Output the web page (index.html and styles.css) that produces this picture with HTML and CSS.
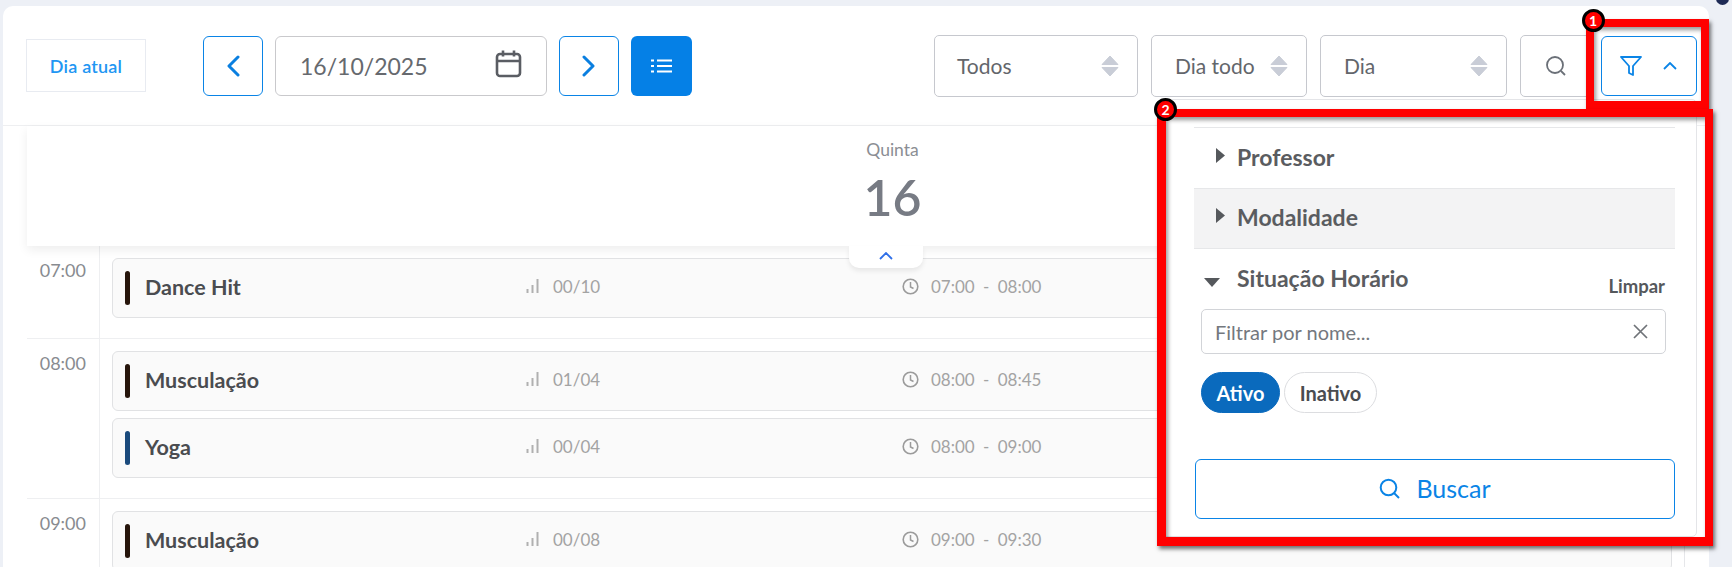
FILE: index.html
```html
<!DOCTYPE html>
<html lang="pt-BR">
<head>
<meta charset="utf-8">
<title>Agenda</title>
<link rel="stylesheet" href="styles.css">
</head>
<body>
<div class="avatar-edge"></div>
<main class="card">
  <header class="toolbar">
    <button class="today">Dia atual</button>
    <div class="date-nav">
      <button class="nav-btn"><svg width="14" height="22" viewBox="0 0 14 22"><path d="M12 2 3 11l9 9" class="stroke-blue"/></svg></button>
      <div class="date-field">
        <span>16/10/2025</span>
        <svg class="cal" width="27" height="29" viewBox="0 0 27 29"><rect x="2" y="5" width="23" height="22" rx="3" fill="none" stroke="#5a5d63" stroke-width="2.6"/><path d="M2 12h23M8 1.500v6M19 1.500v6" fill="none" stroke="#5a5d63" stroke-width="2.600"/></svg>
      </div>
      <button class="nav-btn"><svg width="14" height="22" viewBox="0 0 14 22"><path d="m2 2 9 9-9 9" class="stroke-blue"/></svg></button>
      <button class="list-btn"><svg width="21" height="14" viewBox="0 0 21 14"><path d="M0 1.500h3M6 1.500h15M0 7h3M6 7h15M0 12.500h3M6 12.500h15" stroke="#fff" stroke-width="2" fill="none"/></svg></button>
    </div>
    <div class="filters">
      <div class="select sel-todos"><span>Todos</span><svg class="updown" width="18" height="22" viewBox="0 0 18 22"><path d="M9 1 17 9.500H1zM1 12.500h16L9 21z" fill="#c9cdd7" stroke="#c9cdd7" stroke-linejoin="round"/></svg></div>
      <div class="select sel-dia-todo"><span>Dia todo</span><svg class="updown" width="18" height="22" viewBox="0 0 18 22"><path d="M9 1 17 9.500H1zM1 12.500h16L9 21z" fill="#c9cdd7" stroke="#c9cdd7" stroke-linejoin="round"/></svg></div>
      <div class="select sel-dia"><span>Dia</span><svg class="updown" width="18" height="22" viewBox="0 0 18 22"><path d="M9 1 17 9.500H1zM1 12.500h16L9 21z" fill="#c9cdd7" stroke="#c9cdd7" stroke-linejoin="round"/></svg></div>
      <button class="search-btn"><svg width="22" height="22" viewBox="0 0 22 22"><circle cx="10" cy="10" r="8" fill="none" stroke="#6b7078" stroke-width="1.800"/><path d="m16 16 4 4" stroke="#6b7078" stroke-width="1.800" fill="none"/></svg></button>
      <button class="filter-btn">
        <svg width="22" height="20" viewBox="0 0 22 20"><path d="M1 1h20l-8 9v9l-4-2v-7z" fill="none" stroke="#0a84e6" stroke-width="1.800" stroke-linejoin="round"/></svg>
        <svg width="14" height="8" viewBox="0 0 14 8"><path d="m1 7 6-6 6 6" fill="none" stroke="#0a84e6" stroke-width="1.800"/></svg>
      </button>
    </div>
  </header>

  <section class="schedule">
    <div class="day-head">
      <div class="day-name">Quinta</div>
      <div class="day-num">16</div>
    </div>

    <div class="slot">
      <div class="slot-time">07:00</div>
      <div class="slot-rows">
        <article class="row">
          <i class="bar bar-dark"></i><b class="name">Dance Hit</b>
          <span class="meta"><svg width="13" height="14" viewBox="0 0 13 14"><path d="M1.500 14v-4M6.500 14V6M11.500 14V0" stroke="#b0b0b0" stroke-width="2" fill="none"/></svg>00/10</span>
          <span class="meta meta-time"><svg width="17" height="17" viewBox="0 0 17 17"><circle cx="8.500" cy="8.500" r="7.300" fill="none" stroke="#9b9b9b" stroke-width="1.600"/><path d="M8.500 4v5l3 1.500" fill="none" stroke="#9b9b9b" stroke-width="1.500"/></svg>07:00 - 08:00</span>
        </article>
      </div>
    </div>

    <div class="slot">
      <div class="slot-time">08:00</div>
      <div class="slot-rows">
        <article class="row">
          <i class="bar bar-dark"></i><b class="name">Musculação</b>
          <span class="meta"><svg width="13" height="14" viewBox="0 0 13 14"><path d="M1.500 14v-4M6.500 14V6M11.500 14V0" stroke="#b0b0b0" stroke-width="2" fill="none"/></svg>01/04</span>
          <span class="meta meta-time"><svg width="17" height="17" viewBox="0 0 17 17"><circle cx="8.500" cy="8.500" r="7.300" fill="none" stroke="#9b9b9b" stroke-width="1.600"/><path d="M8.500 4v5l3 1.500" fill="none" stroke="#9b9b9b" stroke-width="1.500"/></svg>08:00 - 08:45</span>
        </article>
        <article class="row">
          <i class="bar bar-blue"></i><b class="name">Yoga</b>
          <span class="meta"><svg width="13" height="14" viewBox="0 0 13 14"><path d="M1.500 14v-4M6.500 14V6M11.500 14V0" stroke="#b0b0b0" stroke-width="2" fill="none"/></svg>00/04</span>
          <span class="meta meta-time"><svg width="17" height="17" viewBox="0 0 17 17"><circle cx="8.500" cy="8.500" r="7.300" fill="none" stroke="#9b9b9b" stroke-width="1.600"/><path d="M8.500 4v5l3 1.500" fill="none" stroke="#9b9b9b" stroke-width="1.500"/></svg>08:00 - 09:00</span>
        </article>
      </div>
    </div>

    <div class="slot">
      <div class="slot-time">09:00</div>
      <div class="slot-rows">
        <article class="row">
          <i class="bar bar-dark"></i><b class="name">Musculação</b>
          <span class="meta"><svg width="13" height="14" viewBox="0 0 13 14"><path d="M1.500 14v-4M6.500 14V6M11.500 14V0" stroke="#b0b0b0" stroke-width="2" fill="none"/></svg>00/08</span>
          <span class="meta meta-time"><svg width="17" height="17" viewBox="0 0 17 17"><circle cx="8.500" cy="8.500" r="7.300" fill="none" stroke="#9b9b9b" stroke-width="1.600"/><path d="M8.500 4v5l3 1.500" fill="none" stroke="#9b9b9b" stroke-width="1.500"/></svg>09:00 - 09:30</span>
        </article>
      </div>
    </div>

    <button class="collapse-tab"><svg width="14" height="8" viewBox="0 0 14 8"><path d="m1 7 6-6 6 6" fill="none" stroke="#2f6fe8" stroke-width="1.800"/></svg></button>
  </section>

  <aside class="filter-panel">
    <div class="acc-row">
      <svg class="caret" width="9" height="15" viewBox="0 0 9 15"><path d="M0 0 9 7.500 0 15z" fill="#55585c"/></svg>
      <strong>Professor</strong>
    </div>
    <div class="acc-row acc-active">
      <svg class="caret" width="9" height="15" viewBox="0 0 9 15"><path d="M0 0 9 7.500 0 15z" fill="#55585c"/></svg>
      <strong>Modalidade</strong>
    </div>
    <div class="acc-open">
      <svg class="caret-down" width="16" height="9" viewBox="0 0 16 9"><path d="M0 0h16L8 9z" fill="#55585c"/></svg>
      <strong>Situação Horário</strong>
      <span class="clear">Limpar</span>
    </div>
    <div class="name-filter">
      <span>Filtrar por nome...</span>
      <svg width="15" height="15" viewBox="0 0 15 15"><path d="m1 1 13 13M14 1 1 14" stroke="#6f7378" stroke-width="1.700" fill="none"/></svg>
    </div>
    <div class="pills">
      <span class="pill pill-on">Ativo</span>
      <span class="pill">Inativo</span>
    </div>
    <button class="submit">
      <svg width="21" height="21" viewBox="0 0 21 21"><circle cx="9.500" cy="9.500" r="7.800" fill="none" stroke="#0a84e6" stroke-width="2"/><path d="m15 15 5 5" stroke="#0a84e6" stroke-width="2" fill="none"/></svg>
      Buscar
    </button>
  </aside>
</main>

<div class="mark mark-one"><span class="badge">1</span></div>
<div class="mark mark-two"><span class="badge">2</span></div>
</body>
</html>
```

FILE: styles.css
```css
* { box-sizing: border-box; }

html, body {
  margin: 0;
  height: 567px;
  overflow: hidden;
}

body {
  background: #edf0f6;
  font-family: "Lato", "Noto Sans", sans-serif;
  color: #4a4c50;
  padding: 6px 23px 0 3px;
  position: relative;
}

button {
  font-family: inherit;
  background: #fff;
  padding: 0;
  cursor: pointer;
}

.avatar-edge {
  position: absolute;
  top: -6px;
  left: 1716px;
  width: 13px;
  height: 11px;
  border-radius: 0 0 7px 7px;
  background: #1d2a55;
}

.card {
  background: #fff;
  height: 561px;
  border-radius: 10px 10px 0 0;
  overflow: hidden;
  position: relative;
}

.toolbar {
  height: 120px;
  padding: 0 12px 0 23px;
  border-bottom: 1px solid #eeeff1;
  display: flex;
  align-items: center;
}

.today {
  width: 120px;
  height: 53px;
  border: 1px solid #e8ebf1;
  color: #2196f3;
  font-size: 18px;
  font-weight: 600;
  letter-spacing: .2px;
  margin-right: 57px;
}

.date-nav {
  display: flex;
  gap: 12px;
}

.nav-btn {
  width: 60px;
  height: 60px;
  border: 1px solid #0a84e6;
  border-radius: 6px;
  display: flex;
  align-items: center;
  justify-content: center;
}

.stroke-blue {
  fill: none;
  stroke: #0a7fe0;
  stroke-width: 3;
  stroke-linecap: round;
  stroke-linejoin: round;
}

.date-field {
  width: 272px;
  height: 60px;
  border: 1px solid #c9c9cc;
  border-radius: 6px;
  padding: 0 24px 0 24px;
  display: flex;
  align-items: center;
  justify-content: space-between;
  font-size: 23px;
  color: #66696e;
}

.cal { margin-top: -5px; }

.list-btn {
  width: 61px;
  height: 60px;
  border: 0;
  border-radius: 6px;
  background: #0580e6;
  display: flex;
  align-items: center;
  justify-content: center;
}

.filters {
  margin-left: auto;
  display: flex;
  align-items: center;
  gap: 13px;
}

.select {
  height: 62px;
  border: 1px solid #c6c8ce;
  border-radius: 5px;
  display: flex;
  align-items: center;
  justify-content: space-between;
  font-size: 21px;
  color: #63666b;
}

.sel-todos { width: 204px; padding: 0 18px 0 22px; }
.sel-dia-todo { width: 156px; padding: 0 18px 0 23px; }
.sel-dia { width: 187px; padding: 0 18px 0 23px; }

.search-btn {
  width: 71px;
  height: 62px;
  border: 1px solid #c6c8ce;
  border-radius: 5px;
  display: flex;
  align-items: center;
  justify-content: center;
  padding-left: 1px;
  margin-right: -3px;
}

.filter-btn {
  width: 96px;
  height: 60px;
  border: 1px solid #0a84e6;
  border-radius: 6px;
  display: flex;
  align-items: center;
  gap: 21px;
  padding: 0 0 0 18px;
}

.schedule {
  position: relative;
}

.day-head {
  position: relative;
  z-index: 1;
  height: 120px;
  margin: 0 24px 0 24px;
  background: #fff;
  box-shadow: 0 4px 10px rgba(0, 0, 0, .07);
  text-align: center;
  padding: 13px 0 0 73px;
}

.day-name {
  font-size: 17.5px;
  line-height: 22px;
  color: #8b8e94;
}

.day-num {
  font-size: 50px;
  line-height: 60px;
  font-weight: 600;
  color: #777b84;
  margin-top: 6px;
}

.collapse-tab {
  position: absolute;
  z-index: 2;
  top: 120px;
  left: 846px;
  width: 74px;
  height: 22px;
  border: 0;
  border-radius: 0 0 10px 10px;
  box-shadow: 0 3px 5px rgba(0, 0, 0, .08);
  display: flex;
  align-items: center;
  justify-content: center;
  padding-bottom: 2px;
}

.slot {
  margin: 0 24px;
  display: flex;
  border-bottom: 1px solid #eeeff1;
  border-right: 1px solid #e6e7ea;
}

.slot-time {
  width: 73px;
  flex: none;
  border-right: 1px solid #eeeff1;
  font-size: 18px;
  line-height: 24px;
  padding: 12px 13px 0 0;
  text-align: right;
  color: #888b90;
}

.slot-rows {
  flex: 1;
  padding: 12px 12px 20px 12px;
  display: flex;
  flex-direction: column;
  gap: 7px;
}

.row {
  height: 60px;
  background: #fafafa;
  border: 1px solid #e1e2e4;
  border-radius: 6px;
  display: grid;
  grid-template-columns: 5px 396px 376px 1fr;
  align-items: center;
  padding-left: 12px;
}

.bar {
  width: 5px;
  height: 34px;
  border-radius: 3px;
}

.bar-dark { background: #26150b; }
.bar-blue { background: #1a4a7c; }

.name {
  font-size: 21.5px;
  line-height: 26px;
  font-weight: 700;
  color: #4a4c50;
  padding: 0 0 2px 15px;
}

.meta {
  display: flex;
  align-items: center;
  gap: 14px;
  font-size: 17px;
  line-height: 22px;
  color: #a3a3a3;
  padding-bottom: 2px;
}

.meta svg { margin-top: -2px; }
.meta-time { gap: 12px; word-spacing: 4px; }

.filter-panel {
  position: absolute;
  z-index: 3;
  top: 93px;
  left: 1159px;
  width: 535px;
  height: 438px;
  background: #fff;
  border: 1px solid #e4e5e8;
  border-radius: 5px;
  padding: 27px 21px 17px 31px;
  display: flex;
  flex-direction: column;
}

.acc-row {
  height: 61px;
  border-top: 1px solid #e6e7e9;
  display: flex;
  align-items: center;
  padding: 0 0 3px 22px;
  gap: 12px;
}

.acc-row strong, .acc-open strong {
  font-size: 23px;
  line-height: 28px;
  font-weight: 700;
  color: #5a5c60;
}

.acc-active {
  background: #f3f3f4;
  border-bottom: 1px solid #e6e7e9;
}

.caret { margin-top: -3px; }

.acc-open {
  height: 60px;
  display: flex;
  align-items: flex-start;
  padding: 15px 10px 0 10px;
  gap: 17px;
  position: relative;
}

.caret-down { margin-top: 14px; }

.clear {
  margin-left: auto;
  font-size: 18.5px;
  line-height: 22px;
  font-weight: 700;
  color: #55585c;
  margin-top: 11px;
}

.name-filter {
  height: 45px;
  margin: 0 9px 0 7px;
  border: 1px solid #d2d4d8;
  border-radius: 5px;
  display: flex;
  align-items: center;
  justify-content: space-between;
  padding: 0 17px 0 13px;
  font-size: 20px;
  color: #74787e;
}

.pills {
  margin: 18px 0 0 7px;
  display: flex;
  gap: 4px;
}

.pill {
  height: 41px;
  width: 93px;
  border: 1px solid #dcdde0;
  border-radius: 21px;
  display: flex;
  align-items: center;
  justify-content: center;
  font-size: 20px;
  font-weight: 700;
  color: #4a4c50;
}

.pill-on {
  width: 79px;
  background: #0a6abd;
  border-color: #0a6abd;
  color: #fff;
}

.submit {
  margin-top: auto;
  height: 60px;
  margin-left: 1px;
  border: 1px solid #0a84e6;
  border-radius: 6px;
  display: flex;
  align-items: center;
  justify-content: center;
  gap: 16px;
  font-size: 25px;
  padding-bottom: 2px;
  color: #0a84e6;
}

.mark {
  position: absolute;
  z-index: 5;
  border: 8px solid #ff0000;
  box-shadow: 2px 3px 4px rgba(0, 0, 0, .55), inset 2px 3px 4px rgba(0, 0, 0, .4);
}

.mark-one {
  left: 1586px;
  top: 19px;
  width: 123px;
  height: 90px;
}

.mark-two {
  left: 1157px;
  top: 109px;
  width: 556px;
  height: 437px;
  border-width: 8px 8px 9px 9px;
}

.badge {
  position: absolute;
  left: -12.500px;
  top: -18.500px;
  width: 23px;
  height: 23px;
  border-radius: 50%;
  background: #f00;
  border: 3px solid #000;
  color: #fff;
  font-size: 14px;
  font-weight: 700;
  line-height: 17px;
  text-align: center;
}

.mark-two .badge {
  left: -12px;
  top: -19.500px;
}
```
